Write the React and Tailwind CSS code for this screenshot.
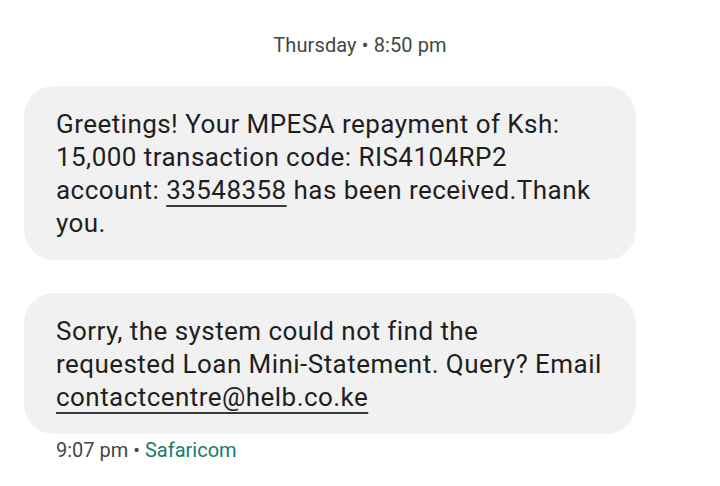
export default function App() {
  return (
    <div className="w-[720px] h-[486px] bg-white overflow-hidden" style={{ fontFamily: "Roboto, 'Noto Sans', sans-serif" }}>
      <div className="pt-[33px] flex justify-center text-[20px] leading-[24px] tracking-[0.1px] text-[#444746]">
        Thursday • 8:50 pm
      </div>
      <div className="px-[24px] pt-[29px]">
        <div className="w-[612px] rounded-[30px] bg-[#f1f1f1] pl-[32px] pr-[24px] pt-[22px] pb-[20px] text-[26px] leading-[33px] tracking-[0.45px] text-[#1f1f1f] whitespace-nowrap">
          Greetings! Your MPESA repayment of Ksh:
          <br />
          15,000 transaction code: RIS4104RP2
          <br />
          account: <span className="underline decoration-2 decoration-[#3a3a3a] underline-offset-[6px]">33548358</span> has been received.Thank
          <br />
          you.
        </div>
        <div className="mt-[33px] w-[612px] rounded-[30px] bg-[#f1f1f1] pl-[32px] pr-[24px] pt-[22px] pb-[20px] text-[26px] leading-[33px] tracking-[0.45px] text-[#1f1f1f] whitespace-nowrap">
          Sorry, the system could not find the
          <br />
          requested Loan Mini-Statement. Query? Email
          <br />
          <span className="underline decoration-2 decoration-[#3a3a3a] underline-offset-[6px]">contactcentre@helb.co.ke</span>
        </div>
        <div className="pl-[32px] pt-[4px] text-[20px] leading-[24px] text-[#444746]">
          9:07 pm • <span className="text-[#1b7a6b]">Safaricom</span>
        </div>
      </div>
    </div>
  );
}
